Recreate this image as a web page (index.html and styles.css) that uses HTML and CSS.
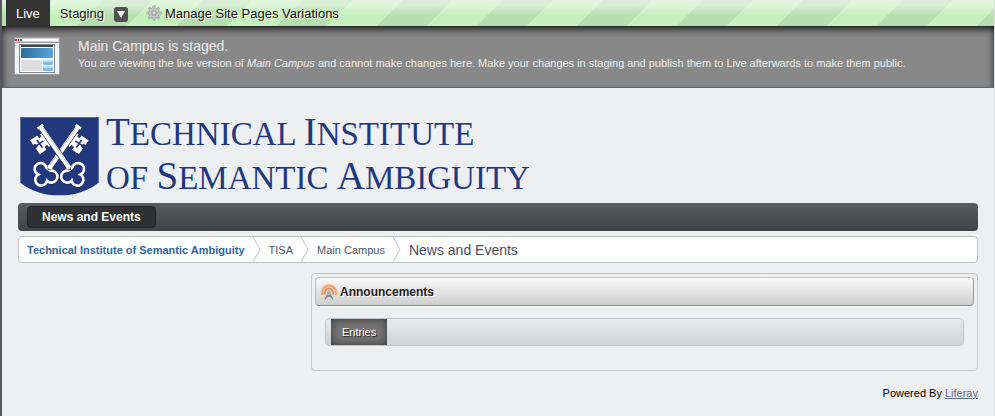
FILE: index.html
```html
<!DOCTYPE html>
<html lang="en">
<head>
<meta charset="utf-8">
<title>News and Events - Main Campus</title>
<link rel="stylesheet" href="styles.css">
</head>
<body>
<div class="page">
  <nav class="staging-bar" aria-label="Staging">
    <a class="stage-tab active" href="#">Live</a>
    <a class="stage-tab" href="#">Staging</a>
    <button class="menu-button" type="button" aria-label="Staging menu">
      <svg width="14" height="15" viewBox="0 0 14 15"><path d="M3 4h8l-4 7z" fill="#fff"/></svg>
    </button>
    <a class="manage" href="#">
      <svg width="16" height="16" viewBox="0 0 16 16">
        <g stroke="#8a8d8a" stroke-width="2.600"><path d="M8 .5V15.500M.5 8H15.500M2.700 2.700L13.300 13.300M13.300 2.700L2.700 13.300"/></g>
        <circle cx="8" cy="8" r="5.600" fill="#8a8d8a"/>
        <g stroke="#c6c8c6" stroke-width="1.500"><path d="M8 1V15M1 8H15M3 3L13 13M13 3L3 13"/></g>
        <circle cx="8" cy="8" r="5" fill="#c4c6c4"/>
        <circle cx="8" cy="8" r="2.200" fill="#d4ecce" stroke="#8a8a8a"/>
      </svg>
      Manage Site Pages Variations
    </a>
  </nav>

  <section class="notice">
    <svg width="46" height="38" viewBox="0 0 46 38">
      <defs><linearGradient id="hero"><stop offset="0" stop-color="#2f6d98"/><stop offset="1" stop-color="#58a5dc"/></linearGradient></defs>
      <rect width="46" height="38" fill="#9d9fa3"/>
      <rect x="1" y="1" width="44" height="4" fill="#d2d2d4"/>
      <rect x="8" y="2" width="36" height="2" fill="#fff"/>
      <path d="M1 2h2v2H1z" fill="#d33"/><path d="M4 2h1v2H4z" fill="#933"/><path d="M6 2h2v2H6z" fill="#2b8a2b"/>
      <rect x="1" y="6" width="44" height="31" fill="#f0f4fb"/>
      <rect x="5.500" y="7.500" width="35" height="28" fill="#fff" stroke="#85898e"/>
      <rect x="7" y="8" width="32" height="2" fill="#454545"/>
      <rect x="7" y="11" width="32" height="10" rx="1" fill="url(#hero)"/>
      <rect x="7" y="23" width="21" height="11" rx="1" fill="#dedede"/>
      <rect x="29" y="23" width="10" height="5" rx="1" fill="#82b9e2"/><rect x="29" y="23" width="10" height="2" rx="1" fill="#b7dcf5"/>
      <rect x="29" y="29" width="10" height="5" rx="1" fill="#82b9e2"/><rect x="29" y="29" width="10" height="2" rx="1" fill="#b7dcf5"/>
    </svg>
    <div>
      <h2>Main Campus is staged.</h2>
      <p>You are viewing the live version of <em>Main Campus</em> and cannot make changes here. Make your changes in staging and publish them to Live afterwards to make them public.</p>
    </div>
  </section>

  <main>
    <header class="banner">
      <svg width="79" height="79" viewBox="0 0 237 237">
        <defs>
          <g id="key">
            <g transform="translate(61 29) rotate(-35)">
              <g stroke="#151c35" stroke-width="2">
                <path fill="#fff" d="M-6 17H-15V25H-22V15H-50V34H-42V44H-50V68H-23V58H-15V66H-6z"/>
                <path fill="#fff" d="M-8 5V147H-14V156H14V147H8V5H11V-5H-11V5z"/>
              </g>
              <path d="M-31 27V55M-42 40H-17" stroke="#21387f" stroke-width="5"/>
              <path d="M4 8V143" stroke="#a3a3a3" stroke-width="2"/>
              <g fill="#151c35"><circle cx="-20" cy="169" r="23"/><circle cx="20" cy="169" r="23"/><circle cy="194" r="23"/></g>
              <g fill="#fff"><circle cx="-20" cy="169" r="22"/><circle cx="20" cy="169" r="22"/><circle cy="194" r="22"/></g>
              <g fill="#21387f"><circle cx="-20" cy="169" r="14"/><circle cx="20" cy="169" r="14"/><circle cy="194" r="14"/><path d="M-16 160H16V178L0 190L-16 178z"/></g>
            </g>
          </g>
        </defs>
        <path fill="#21387f" d="M1 1H236V197Q187 235 118 235Q50 235 1 197z"/>
        <use href="#key" transform="translate(236) scale(-1 1)"/>
        <use href="#key"/>
      </svg>
      <h1><b>T</b>ECHNICAL <b>I</b>NSTITUTE<br>OF <b>S</b>EMANTIC <b>A</b>MBIGUITY</h1>
    </header>

    <nav class="site-nav" aria-label="Pages"><a href="#">News and Events</a></nav>

    <nav class="crumbs" aria-label="Breadcrumb">
      <a class="home" href="#">Technical Institute of Semantic Ambiguity</a>
      <svg width="9" height="25" viewBox="0 0 9 25"><path d="M1 0L8 12.500L1 25" fill="none" stroke="#bfc1c4"/></svg>
      <a href="#">TISA</a>
      <svg width="9" height="25" viewBox="0 0 9 25"><path d="M1 0L8 12.500L1 25" fill="none" stroke="#bfc1c4"/></svg>
      <a href="#">Main Campus</a>
      <svg width="9" height="25" viewBox="0 0 9 25"><path d="M1 0L8 12.500L1 25" fill="none" stroke="#bfc1c4"/></svg>
      <span class="current">News and Events</span>
    </nav>

    <div class="columns">
      <section class="portlet">
        <h2 class="portlet-title">
          <svg width="16" height="16" viewBox="0 0 16 16">
            <path d="M1.500 11A7 7 0 1 1 14.500 11" fill="none" stroke="#f6a878" stroke-width="2.500"/>
            <path d="M4 10.500A4.300 4.300 0 1 1 12 10.500" fill="none" stroke="#f28b4d" stroke-width="2"/>
            <path d="M8 8L4 15.500M8 8L12 15.500M5.500 13L10 11M10.500 13L6 11" fill="none" stroke="#909090" stroke-width="1.400"/>
            <circle cx="8" cy="8" r="1.800" fill="#b9aaa2"/>
          </svg>
          Announcements
        </h2>
        <div class="tabs"><a href="#">Entries</a></div>
      </section>
    </div>
  </main>

  <footer>Powered By <a href="#">Liferay</a></footer>
</div>
</body>
</html>
```
FILE: styles.css
```css
* { box-sizing: border-box; }
body {
  margin: 0;
  background: #eeeff1;
  color: #000;
  font-family: "Liberation Sans", Arial, sans-serif;
  font-size: 11px;
}
svg { display: block; flex: none; }
h1, h2, p { margin: 0; }
a { color: inherit; text-decoration: none; }

.page {
  min-height: 100vh;
  border-left: 2px solid #55585c;
  border-right: 1px solid #dedfe1;
}

.staging-bar {
  display: flex;
  align-items: center;
  height: 26px;
  padding-left: 4px;
  font-size: 13px;
  color: #111;
  text-shadow: 1px 1px 0 #fff;
  background:
    linear-gradient(rgba(255, 255, 255, .5) 0, rgba(255, 255, 255, .45) 20%, rgba(255, 255, 255, 0) 60%),
    linear-gradient(135deg, #b5e0ae 25%, #c4f0bc 25%, #c4f0bc 50%, #b5e0ae 50%, #b5e0ae 75%, #c4f0bc 75%) 1px 0 / 100px 100px;
}
.stage-tab { padding: 0 10px; line-height: 27px; }
.stage-tab.active { background: #333; color: #fff; text-shadow: none; }
.menu-button {
  display: block;
  width: 14px;
  height: 15px;
  margin-top: 3px;
  padding: 0;
  border: 0;
  border-radius: 3px;
  background: #505050;
}
.manage { display: flex; align-items: center; gap: 3px; margin-left: 18px; line-height: 27px; }

.notice {
  display: flex;
  gap: 18px;
  padding: 11px 12px 12px;
  color: #eee;
  background: #888;
  border-bottom: 1px solid #666;
  box-shadow: inset 0 8px 10px -6px #000, inset 6px 0 6px -5px #444, inset -6px 0 6px -5px #444;
}
.notice h2 { font-size: 14px; line-height: 18px; font-weight: normal; }
.notice p { line-height: 16px; }

main { padding: 24px 16px 0; }
.banner { display: flex; gap: 7px; padding-left: 2px; height: 91px; }
.banner svg { margin-top: 5px; }
h1 {
  font: 33px/44px "Liberation Serif", "Times New Roman", serif;
  color: #21387f;
  white-space: nowrap;
}
h1 b { font-weight: normal; font-size: 39px; line-height: 36px; }

.site-nav {
  display: flex;
  align-items: center;
  height: 28px;
  padding: 0 9px;
  border-radius: 4px;
  background: linear-gradient(#5a5b5d, #424345);
}
.site-nav a {
  padding: 0 14px;
  line-height: 20px;
  border: 1px solid #222;
  border-radius: 4px;
  background: #303133;
  color: #fff;
  font-size: 12px;
  font-weight: bold;
}

.crumbs {
  display: flex;
  align-items: center;
  gap: 8px;
  height: 27px;
  margin-top: 5px;
  padding-left: 8px;
  border: 1px solid #bfc1c4;
  border-radius: 4px;
  background: #fff;
  color: #4c5669;
}
.crumbs svg { margin-left: -1px; }
.crumbs .home { color: #336699; font-weight: bold; }
.crumbs .current { font-size: 14px; color: #444e60; }

.columns { display: grid; grid-template-columns: 293fr 667fr; margin-top: 10px; }
.portlet {
  grid-column: 2;
  padding: 3px 3px 24px;
  border: 1px solid #c5c7ca;
  border-radius: 4px;
}
.portlet-title {
  display: flex;
  align-items: center;
  gap: 3px;
  height: 29px;
  padding-left: 5px;
  border: 1px solid;
  border-color: #c6c6c6 #9a9a9a #8c8c8c #b8b8b8;
  border-radius: 4px;
  background: linear-gradient(#fafafa, #cecece);
  box-shadow: 0 1px 0 #fff;
  color: #1b1b1b;
  font-size: 12px;
  text-shadow: 1px 1px 0 #fff;
}
.tabs {
  display: flex;
  height: 28px;
  margin: 12px 10px 0;
  padding-left: 5px;
  border: 1px solid #c2c4c7;
  border-radius: 4px;
  background: linear-gradient(#e8e9eb, #d2d3d5);
}
.tabs a {
  padding: 0 11px;
  line-height: 26px;
  color: #fff;
  background: #777;
  box-shadow: inset 0 0 10px #333;
  text-shadow: 1px 1px 1px #222;
}
footer { padding: 16px 16px 0; text-align: right; line-height: 13px; }
footer a { color: #5b677d; text-decoration: underline; }
```
